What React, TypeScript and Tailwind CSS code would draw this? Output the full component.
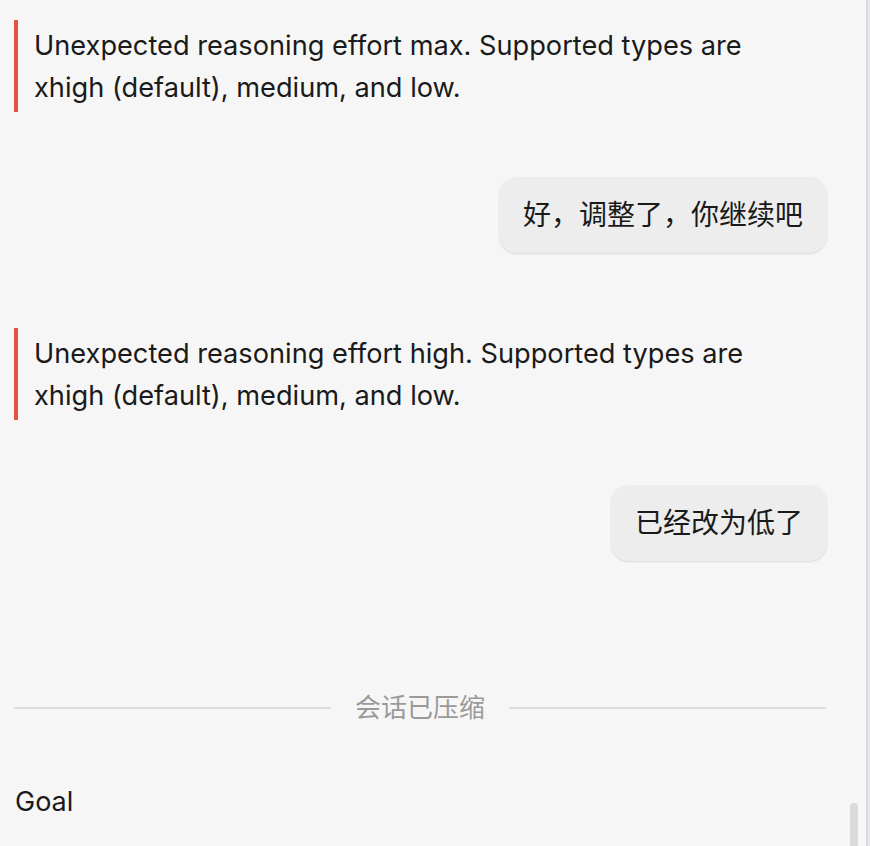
import React from 'react';

const font = { fontFamily: 'Inter, "Noto Sans CJK SC", sans-serif' };

const ErrorNote = ({ text }: { text: string }) => (
  <div className="flex">
    <div className="w-[4px] bg-[#e8513b] shrink-0" />
    <div className="pl-[16px] pt-[5px] pb-[3px] text-[27.2px] leading-[42px] text-[#1a1a1a] max-w-[760px]">
      {text}
    </div>
  </div>
);

const UserBubble = ({ text }: { text: string }) => (
  <div className="flex justify-end pr-[39px]">
    <div className="rounded-[18px] bg-[#ededed] px-[24px] py-[19px] text-[28px] leading-[38px] text-[#1a1a1a] shadow-[0_1px_2px_rgba(0,0,0,0.12)]">
      {text}
    </div>
  </div>
);

export default function App() {
  return (
    <div className="flex h-[846px] w-[870px] overflow-hidden bg-[#f6f6f6]" style={font}>
      <div className="relative flex-1 pl-[14px] pt-[20px]">
        <ErrorNote text="Unexpected reasoning effort max. Supported types are xhigh (default), medium, and low." />
        <div className="mt-[65px]">
          <UserBubble text="好，调整了，你继续吧" />
        </div>
        <div className="mt-[75px]">
          <ErrorNote text="Unexpected reasoning effort high. Supported types are xhigh (default), medium, and low." />
        </div>
        <div className="mt-[65px]">
          <UserBubble text="已经改为低了" />
        </div>
        <div className="mt-[130px] flex items-center gap-[24px] pr-[40px]">
          <div className="h-[2px] flex-1 bg-[#dcdcdc]" />
          <span className="text-[26px] leading-[34px] text-[#9a9a9a]">会话已压缩</span>
          <div className="h-[2px] flex-1 bg-[#dcdcdc]" />
        </div>
        <div className="mt-[59px] pl-[1px] text-[27px] leading-[36px] text-[#1a1a1a]">Goal</div>
        <div className="absolute right-[8px] top-[803px] h-[60px] w-[8px] rounded-full bg-[#dadada]" />
      </div>
      <div className="w-[2px] bg-[#d8d8dd]" />
      <div className="w-[2px] bg-[#e9e9ed]" />
    </div>
  );
}
